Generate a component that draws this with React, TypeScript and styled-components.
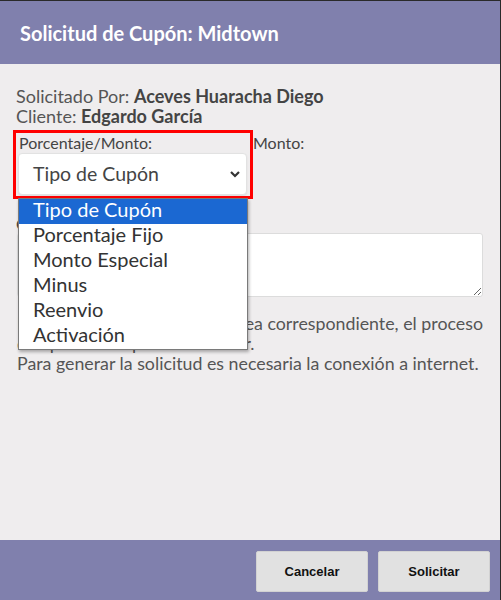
import styled, { createGlobalStyle } from "styled-components";

const GlobalStyle = createGlobalStyle`
  html, body {
    margin: 0;
    padding: 0;
    background: #2a2a2a;
  }
  body {
    font-family: Lato, "Open Sans", sans-serif;
  }
`;

const Modal = styled.div`
  width: 500px;
  height: 599px;
  margin-top: 1px;
  display: flex;
  flex-direction: column;
  background: #efedee;
`;

const Header = styled.div`
  height: 63px;
  flex: none;
  background: #8080ad;
  display: flex;
  align-items: center;
  padding: 0 20px;
  box-sizing: border-box;
`;

const Title = styled.h1`
  margin: 0;
  font-family: Lato, sans-serif;
  font-weight: 700;
  font-size: 20px;
  color: #ffffff;
`;

const Body = styled.div`
  flex: 1;
  padding: 22px 17px 0 16px;
  color: #555555;
  font-size: 18px;
  line-height: 20px;
`;

const InfoLine = styled.div`
  strong {
    color: #444444;
    font-weight: 700;
  }
`;

const FieldRow = styled.div`
  display: flex;
  margin: 4px 0 0 -3px;
`;

const FieldGroup = styled.div<{ $marked?: boolean }>`
  position: relative;
  width: 229px;
  padding: 0 3px 1px 2px;
  border: 3px solid ${(p) => (p.$marked ? "#ff0000" : "transparent")};
`;

const Label = styled.div`
  font-size: 16px;
  line-height: 17px;
  color: #444444;
  padding: 1px 0 2px 1px;
`;

const SelectBox = styled.div`
  height: 42px;
  box-sizing: border-box;
  background: #ffffff;
  border: 1px solid #e2e2e2;
  border-radius: 4px;
  box-shadow: 0 1px 2px rgba(0, 0, 0, 0.08);
  display: flex;
  align-items: center;
  justify-content: space-between;
  padding: 0 5px 0 14px;
  font-size: 19.5px;
  color: #444444;
`;

const OptionList = styled.ul`
  position: absolute;
  left: 2px;
  top: 65px;
  width: 228px;
  margin: 0;
  padding: 0;
  list-style: none;
  background: #ffffff;
  border: 1px solid #7a7a7a;
  box-shadow: 1px 2px 3px rgba(0, 0, 0, 0.3);
  z-index: 2;
`;

const OptionItem = styled.li<{ $active?: boolean }>`
  height: 25px;
  line-height: 21px;
  padding-left: 14px;
  font-size: 20px;
  color: ${(p) => (p.$active ? "#ffffff" : "#333333")};
  background: ${(p) => (p.$active ? "#1b68d2" : "transparent")};
`;

const SideLabel = styled.div`
  font-size: 16px;
  line-height: 17px;
  color: #444444;
  padding-top: 4px;
`;

const CommentLabel = styled.div`
  margin-top: 16px;
  font-size: 16px;
  line-height: 17px;
  color: #444444;
`;

const CommentBox = styled.textarea`
  display: block;
  box-sizing: border-box;
  width: 466px;
  height: 64px;
  margin: 1px 0 0 1px;
  background: #ffffff;
  border: 1px solid #dcdcdc;
  border-radius: 3px;
  font-family: Lato, sans-serif;
  font-size: 16px;
`;

const Notice = styled.p`
  margin: 16px 0 0 1px;
  font-size: 17.8px;
  line-height: 20px;
  color: #555555;
  white-space: nowrap;
`;

const Footer = styled.div`
  height: 60px;
  flex: none;
  background: #8080ad;
  display: flex;
  justify-content: flex-end;
  align-items: flex-start;
  gap: 10px;
  padding: 11px 10px 0 0;
  box-sizing: border-box;
`;

const Button = styled.button`
  width: 112px;
  height: 41px;
  background: #e1e1e1;
  border: 1px solid #d2d2d2;
  border-radius: 2px;
  font-family: "Liberation Sans", Arial, sans-serif;
  font-weight: 700;
  font-size: 13px;
  color: #111111;
  cursor: pointer;
`;

const options = [
  "Tipo de Cupón",
  "Porcentaje Fijo",
  "Monto Especial",
  "Minus",
  "Reenvio",
  "Activación",
];

export default function App() {
  return (
    <>
      <GlobalStyle />
      <Modal>
        <Header>
          <Title>Solicitud de Cupón: Midtown</Title>
        </Header>
        <Body>
          <InfoLine>
            Solicitado Por: <strong>Aceves Huaracha Diego</strong>
          </InfoLine>
          <InfoLine>
            Cliente: <strong>Edgardo García</strong>
          </InfoLine>
          <FieldRow>
            <FieldGroup $marked>
              <Label>Porcentaje/Monto:</Label>
              <SelectBox>
                <span>Tipo de Cupón</span>
                <svg width="12" height="12" viewBox="0 0 12 12">
                  <path
                    d="M2 4 L6 8 L10 4"
                    fill="none"
                    stroke="#333"
                    strokeWidth="2.2"
                  />
                </svg>
              </SelectBox>
              <OptionList>
                {options.map((o, i) => (
                  <OptionItem key={o} $active={i === 0}>
                    {o}
                  </OptionItem>
                ))}
              </OptionList>
            </FieldGroup>
            <SideLabel>Monto:</SideLabel>
          </FieldRow>
          <CommentLabel>Comentarios:</CommentLabel>
          <CommentBox />
          <Notice>
            La solicitud se canalizará al área correspondiente, el proceso
            <br />
            de aprobación puede demorar.
            <br />
            Para generar la solicitud es necesaria la conexión a internet.
          </Notice>
        </Body>
        <Footer>
          <Button>Cancelar</Button>
          <Button>Solicitar</Button>
        </Footer>
      </Modal>
    </>
  );
}
